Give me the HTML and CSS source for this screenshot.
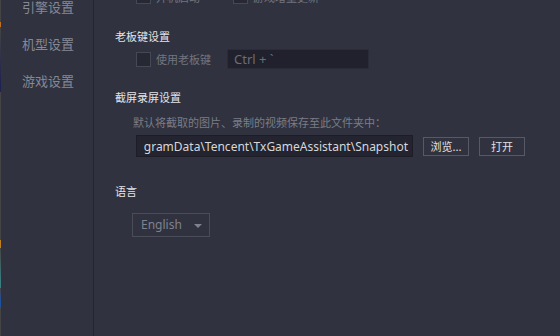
FILE: index.html
```html
<!DOCTYPE html>
<html lang="zh-CN">
<head>
  <meta charset="UTF-8"/>
  <title>设置</title>
  <link rel="stylesheet" href="styles.css">
</head>
<body>

<div class="edge"></div>

<nav class="sidebar">
  <div class="nav-item">引擎设置</div>
  <div class="nav-item">机型设置</div>
  <div class="nav-item">游戏设置</div>
</nav>

<div class="main">
  <div class="row top-row">
    <label class="check"><span class="box"></span>开机启动</label>
    <label class="check"><span class="box"></span>游戏增量更新</label>
  </div>

  <div class="section-title boss-title">老板键设置</div>
  <div class="row boss-row">
    <label class="check"><span class="box"></span>使用老板键</label>
    <div class="hotkey">Ctrl + `</div>
  </div>

  <div class="section-title shot-title">截屏录屏设置</div>
  <div class="hint">默认将截取的图片、录制的视频保存至此文件夹中：</div>
  <div class="row path-row">
    <div class="path"><span>gramData\Tencent\TxGameAssistant\Snapshot</span></div>
    <button class="btn">浏览...</button>
    <button class="btn">打开</button>
  </div>

  <div class="section-title lang-title">语言</div>
  <div class="select">English <span class="caret"></span></div>
</div>

</body>
</html>
```

FILE: styles.css
```css
body {
  margin: 0;
  height: 336px;
  overflow: hidden;
  display: flex;
  background: #30323f;
  font-family: "Noto Sans CJK SC", "Noto Sans", sans-serif;
  color: #7c7f8b;
}
.edge {
  width: 1px;
  background: linear-gradient(#444 0, #444 22px, #c07020 22px, #c07020 27px, #444 27px, #1e2250 85px, #1e2250 92px, #444 92px, #444 240px, #c08020 240px, #c08020 248px, #444 248px, #3a8080 282px, #3a8080 288px, #444 288px, #2050a0 300px, #2050a0 308px, #444 308px);
}
.sidebar {
  width: 93px;
  border-right: 1px solid #1e2736;
  padding-left: 21px;
  box-sizing: border-box;
  flex-shrink: 0;
}
.nav-item {
  font-size: 13px;
  color: #858895;
  height: 37px;
  line-height: 20px;
}
.sidebar .nav-item:first-child {
  margin-top: -3px;
}
.main {
  flex: 1;
  padding-left: 21px;
}
.row {
  display: flex;
  align-items: center;
}
.check {
  display: flex;
  align-items: center;
  font-size: 11px;
  color: #72757f;
}
.box {
  width: 13px;
  height: 13px;
  border: 1px solid #464855;
  background: #262833;
  margin-right: 5px;
}
.top-row {
  margin-top: -11px;
  padding-left: 21px;
  gap: 33px;
  height: 15px;
}
.section-title {
  font-size: 11px;
  color: #e4e4e8;
  line-height: 16px;
}
.boss-title {
  margin-top: 24px;
}
.boss-row {
  margin-top: 5px;
  padding-left: 21px;
  height: 20px;
}
.hotkey {
  margin-left: 16px;
  width: 134px;
  height: 18px;
  border: 1px solid #2a2c38;
  background: #20212c;
  color: #6a6d78;
  font-family: "Noto Sans", sans-serif;
  font-size: 13px;
  line-height: 18px;
  padding-left: 6px;
  box-sizing: content-box;
}
.shot-title {
  margin-top: 20px;
}
.hint {
  margin-top: 9px;
  padding-left: 18px;
  font-size: 11px;
  line-height: 16px;
  color: #7a7d88;
}
.path-row {
  margin-top: 5px;
  padding-left: 21px;
}
.path {
  width: 277px;
  height: 22px;
  border: 1px solid #1c1d26;
  background: #23242f;
  overflow: hidden;
  display: flex;
  justify-content: flex-end;
  align-items: center;
  padding-right: 4px;
  box-sizing: border-box;
}
.path span {
  white-space: nowrap;
  font-family: "Noto Sans", sans-serif;
  font-size: 12px;
  color: #d6d7db;
}
.btn {
  margin-left: 10px;
  width: 46px;
  height: 19px;
  background: #30323f;
  border: 1px solid #575a66;
  color: #e0e0e4;
  font-family: "Noto Sans CJK SC", sans-serif;
  font-size: 11px;
  padding: 0;
}
.lang-title {
  margin-top: 26px;
}
.select {
  margin-top: 14px;
  margin-left: 17px;
  width: 78px;
  height: 24px;
  border: 1px solid #4a4c58;
  box-sizing: border-box;
  font-family: "Noto Sans", sans-serif;
  font-size: 12px;
  color: #7f828d;
  line-height: 22px;
  padding-left: 8px;
  position: relative;
}
.caret {
  position: absolute;
  right: 7px;
  top: 10px;
  border-left: 4px solid transparent;
  border-right: 4px solid transparent;
  border-top: 4px solid #7f828d;
}
```
